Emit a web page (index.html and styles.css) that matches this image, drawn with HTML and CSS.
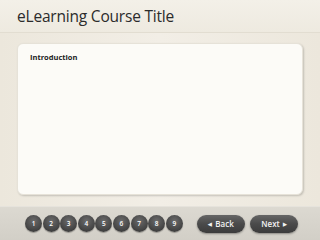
FILE: index.html
```html
<!DOCTYPE html>
<html lang="en">
<head>
    <meta charset="UTF-8">
    <title>eLearning Course Title</title>
    <link rel="stylesheet" href="styles.css">
</head>
<body>
    <div class="header">
        <h1>eLearning Course Title</h1>
    </div>

    <div class="stage">
        <div class="card">
            <h3>Introduction</h3>
        </div>
    </div>

    <div class="footer">
        <div class="pages">
            <button class="dot">1</button>
            <button class="dot">2</button>
            <button class="dot">3</button>
            <button class="dot">4</button>
            <button class="dot">5</button>
            <button class="dot">6</button>
            <button class="dot">7</button>
            <button class="dot">8</button>
            <button class="dot">9</button>
        </div>
        <div class="nav">
            <button class="nav-btn"><span class="arrow left">&#9664;</span>Back</button>
            <button class="nav-btn">Next<span class="arrow right">&#9654;</span></button>
        </div>
    </div>
</body>
</html>
```

FILE: styles.css
```css
html, body {
    margin: 0;
    padding: 0;
}
body {
    width: 320px;
    height: 240px;
    overflow: hidden;
    font-family: "Open Sans", "Liberation Sans", sans-serif;
    background-color: #efebe2;
    display: flex;
    flex-direction: column;
}
.header {
    height: 32px;
    padding-left: 17px;
    background: linear-gradient(#f3f0e8, #eeeae0);
    border-bottom: 1px solid #e2ddd1;
    box-shadow: 0 1px 2px rgba(0, 0, 0, 0.04);
}
h1 {
    margin: 0;
    padding-top: 5px;
    font-size: 15.5px;
    font-weight: normal;
    color: #2b2b2b;
    letter-spacing: -0.2px;
}
.stage {
    flex: 1;
    padding: 10px 17px 11px 17px;
    background: linear-gradient(90deg, #ece7dc, #f2eee6 50%, #ece7dc);
}
.card {
    height: 100%;
    box-sizing: border-box;
    background-color: #fcfbf7;
    border-radius: 6px;
    border: 1px solid #e6e2d8;
    box-shadow: 1px 1px 2px rgba(0, 0, 0, 0.18);
    padding: 8px 12px;
}
h3 {
    margin: 0;
    font-size: 7.5px;
    font-weight: bold;
    color: #222;
}
.footer {
    height: 33px;
    display: flex;
    align-items: center;
    justify-content: space-between;
    padding: 0 22px 0 25px;
    background: linear-gradient(#dcd9d1, #d2cfc7);
    border-top: 1px solid #e6e3dc;
}
.pages {
    display: flex;
    gap: 0.6px;
}
button {
    border: none;
    cursor: pointer;
    color: #f2f2f2;
    font-family: "Open Sans", "Liberation Sans", sans-serif;
    padding: 0;
}
.dot {
    width: 17px;
    height: 17px;
    border-radius: 50%;
    font-size: 6.5px;
    font-weight: 600;
    color: #ffffff;
    background: radial-gradient(circle at 50% 35%, #6b6b6b, #3e3e3e 75%);
    box-shadow: 0 1px 1px rgba(0, 0, 0, 0.3);
}
.nav {
    display: flex;
    gap: 5px;
}
.nav-btn {
    width: 48px;
    height: 18px;
    border-radius: 9px;
    font-size: 8px;
    font-weight: 600;
    background: linear-gradient(#666, #4a4a4a 50%, #3c3c3c);
    box-shadow: 0 1px 2px rgba(0, 0, 0, 0.35);
}
.arrow {
    font-size: 5px;
    vertical-align: 1px;
}
.arrow.left {
    margin-right: 3px;
}
.arrow.right {
    margin-left: 3px;
}
```
